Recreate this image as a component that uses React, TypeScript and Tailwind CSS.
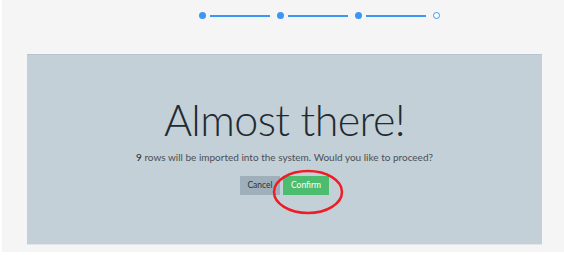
export default function App() {
  const steps = [true, true, true, false];

  return (
    <div className="w-[564px] h-[255px] bg-white overflow-hidden" style={{ fontFamily: "Lato, 'Open Sans', sans-serif" }}>
      <div className="ml-[2px] w-[562px] h-[252px] bg-[#f5f5f5] flex flex-col">
        {/* STEPPER */}
        <div className="flex items-center pl-[197px] pt-[12px] h-[7px] box-content">
          {steps.map((done, i) => (
            <div key={i} className="flex items-center">
              {done ? (
                <span className="w-[7px] h-[7px] rounded-full bg-[#3d95f5]" />
              ) : (
                <span className="w-[7px] h-[7px] rounded-full border-[1.5px] border-[#3d95f5] bg-white" />
              )}
              {i < steps.length - 1 && (
                <span className="ml-[4px] mr-[7px] w-[60px] h-[2px] bg-[#3d95f5]" />
              )}
            </div>
          ))}
        </div>

        {/* PANEL */}
        <div className="mt-[35px] ml-[25px] w-[515px] h-[191px] bg-[#c3d0d8] border-t border-[#b6c4cd] border-b border-b-[#e2e6e9] flex flex-col items-center">
          <h1 className="mt-[43px] text-[43px] leading-[43px] font-light text-[#222a30] tracking-[-0.6px]">
            Almost there!
          </h1>
          <p className="mt-[10px] text-[10px] leading-[13px] text-[#4a4f55]">
            <span className="text-[#222]">9</span> rows will be imported into the system. Would you like to proceed?
          </p>
          <div className="mt-[12px] flex gap-[3px] relative">
            <button className="w-[40px] h-[19px] bg-[#9fb0bb] text-[8.5px] text-[#2a3238]">Cancel</button>
            <button className="w-[46px] h-[19px] bg-[#4cbc6f] text-[8.5px] text-white">Confirm</button>
            <svg className="absolute left-[32px] top-[-7px]" width="72" height="46" viewBox="0 0 72 46">
              <ellipse cx="36" cy="23" rx="34" ry="21" fill="none" stroke="#ee1c24" strokeWidth="2.5" />
            </svg>
          </div>
        </div>
      </div>
    </div>
  );
}
